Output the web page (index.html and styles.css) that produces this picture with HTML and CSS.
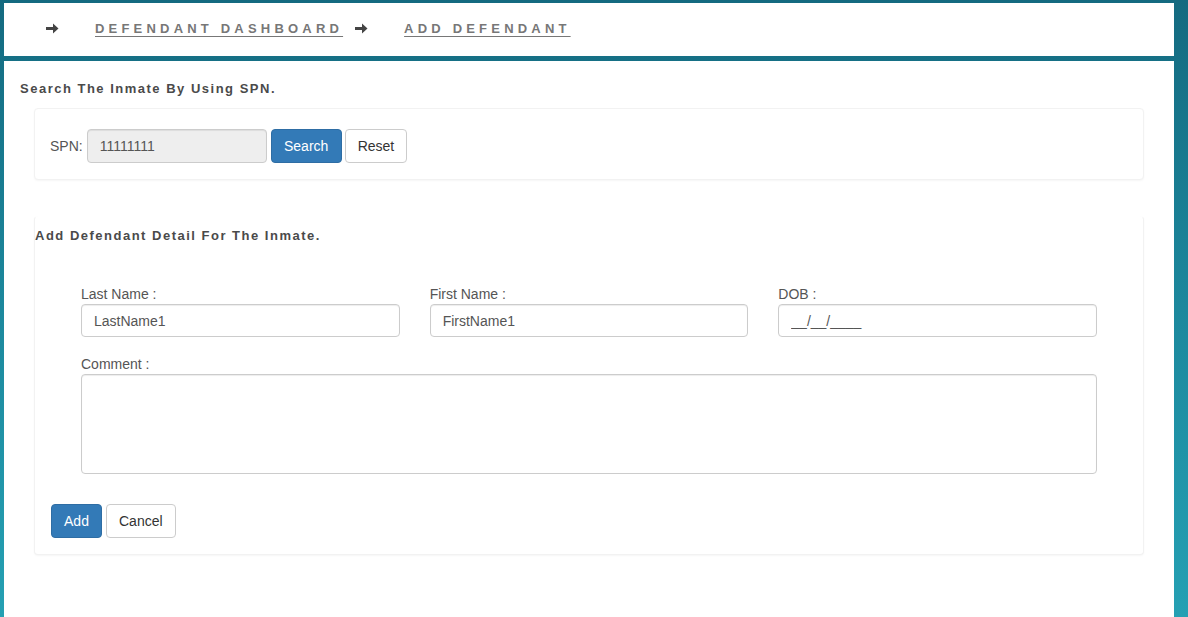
FILE: index.html
```html
<!DOCTYPE html>
<html>
<head>
<meta charset="utf-8">
<link rel="stylesheet" href="styles.css">
</head>
<body>
<div class="frame">
  <nav class="crumbs">
    <span class="arrow"><svg width="13" height="11" viewBox="0 0 13 11"><path d="M0 4h7V0.5L12.5 5.5 7 10.5V7H0z" fill="#444"/></svg></span>
    <a class="crumb" href="#">DEFENDANT DASHBOARD</a>
    <span class="arrow arrow2"><svg width="13" height="11" viewBox="0 0 13 11"><path d="M0 4h7V0.5L12.5 5.5 7 10.5V7H0z" fill="#444"/></svg></span>
    <a class="crumb crumb2" href="#">ADD DEFENDANT</a>
  </nav>
  <main class="main">
    <h4 class="title">Search The Inmate By Using SPN.</h4>
    <section class="panel search-panel">
      <div class="search-row">
        <label class="spn-label">SPN:</label>
        <input class="ctl spn-input" type="text" value="11111111" readonly>
        <button class="btn btn-primary">Search</button>
        <button class="btn btn-default">Reset</button>
      </div>
    </section>
    <section class="panel detail-panel">
      <h4 class="title detail-title">Add Defendant Detail For The Inmate.</h4>
      <div class="fields">
        <div class="field">
          <label>Last Name :</label>
          <input class="ctl" type="text" value="LastName1">
        </div>
        <div class="field">
          <label>First Name :</label>
          <input class="ctl" type="text" value="FirstName1">
        </div>
        <div class="field">
          <label>DOB :</label>
          <input class="ctl" type="text" value="__/__/____">
        </div>
        <div class="field full">
          <label>Comment :</label>
          <textarea class="ctl area"></textarea>
        </div>
      </div>
      <div class="actions">
        <button class="btn btn-primary">Add</button>
        <button class="btn btn-default">Cancel</button>
      </div>
    </section>
  </main>
</div>
</body>
</html>
```
FILE: styles.css
```css
* { box-sizing: border-box; }
html, body { height: 100%; }
body {
  margin: 0;
  font-family: "Liberation Sans", Arial, sans-serif;
  font-size: 14px;
  color: #333;
  background: linear-gradient(to bottom, #146a80 0%, #1c889d 50%, #25a0b3 100%);
  overflow: hidden;
}
.frame {
  padding: 3px 14px 0 4px;
  height: 100%;
  display: flex;
  flex-direction: column;
  gap: 5px;
}
.crumbs {
  background: #fff;
  height: 53px;
  display: flex;
  align-items: center;
  padding-left: 42px;
  padding-bottom: 2px;
}
.arrow { display: flex; align-items: center; width: 13px; }
.arrow2 { margin-left: 12px; }
.crumb {
  font-weight: bold;
  font-size: 13px;
  letter-spacing: 4.2px;
  color: #777;
  text-decoration: underline;
  text-underline-offset: 3px;
  margin-left: 36px;
}
.crumb2 { margin-left: 36px; }
.main {
  background: #fff;
  flex: 1;
  padding: 19px 30px 0 16px;
}
.title {
  margin: 0;
  font-size: 13px;
  line-height: 18px;
  font-weight: bold;
  letter-spacing: 1.5px;
  color: #4a4a4a;
}
.panel {
  border: 1px solid #f2f2f2;
  border-radius: 4px;
  box-shadow: 0 1px 2px rgba(0,0,0,0.04);
  margin-left: 14px;
  background: #fff;
}
.search-panel {
  margin-top: 10px;
  height: 72px;
  padding: 20px 15px 0 15px;
}
.search-row { display: flex; align-items: center; }
.spn-label { margin-right: 4px; color: #555; }
.ctl {
  font-family: "Liberation Sans", Arial, sans-serif;
  font-size: 14px;
  color: #555;
  height: 34px;
  padding: 6px 12px;
  border: 1px solid #ccc;
  border-radius: 4px;
  background: #fff;
  box-shadow: inset 0 1px 1px rgba(0,0,0,0.075);
  outline: none;
}
.spn-input { width: 180px; background: #eee; }
.btn {
  font-family: "Liberation Sans", Arial, sans-serif;
  font-size: 14px;
  height: 34px;
  padding: 6px 12px;
  border-radius: 4px;
  border: 1px solid #ccc;
  background: #fff;
  color: #333;
  margin-left: 4px;
}
.btn-primary { background: #337ab7; border-color: #2e6da4; color: #fff; }
.search-row .btn-primary { margin-left: 4px; width: 71px; margin-right: -1px; }
.detail-panel {
  margin-top: 36px;
  height: 339px;
  padding: 10px 0 0 0;
  border-top-color: transparent;
}
.detail-title { margin-left: 0; }
.fields {
  margin-top: 39px;
  padding: 0 46px;
  display: grid;
  grid-template-columns: 1fr 1fr 1fr;
  column-gap: 30px;
  row-gap: 17px;
}
.field { display: flex; flex-direction: column; }
.field label { line-height: 20px; color: #555; font-size: 14px; }
.field .ctl { height: 33px; }
.field.full { grid-column: 1 / 4; }
.field .area { height: 100px; resize: none; }
.actions {
  margin-top: 30px;
  padding-left: 16px;
  display: flex;
}
.actions .btn { margin-left: 0; margin-right: 4px; }
.actions .btn-primary { width: 51px; }
```
